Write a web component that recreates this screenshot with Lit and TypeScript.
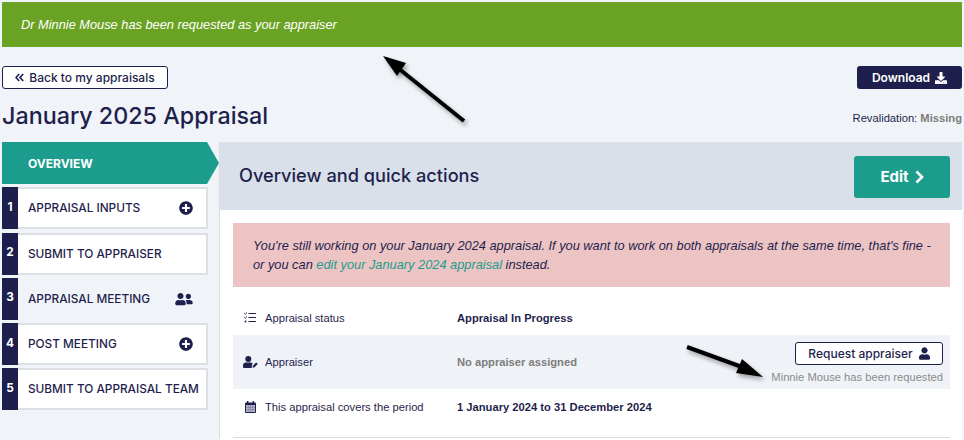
import { LitElement, css, html, svg } from "lit";
import { customElement } from "lit/decorators.js";

const PLUS =
  "M256 8C119 8 8 119 8 256s111 248 248 248 248-111 248-248S393 8 256 8zm144 276c0 6.6-5.4 12-12 12h-92v92c0 6.6-5.4 12-12 12h-56c-6.6 0-12-5.4-12-12v-92h-92c-6.6 0-12-5.4-12-12v-56c0-6.6 5.4-12 12-12h92v-92c0-6.6 5.4-12 12-12h56c6.6 0 12 5.4 12 12v92h92c6.6 0 12 5.4 12 12v56z";
const USER =
  "M224 256c70.7 0 128-57.3 128-128S294.7 0 224 0 96 57.3 96 128s57.3 128 128 128zm89.6 32h-16.7c-22.2 10.2-46.9 16-72.9 16s-50.6-5.8-72.9-16h-16.7C60.2 288 0 348.2 0 422.4V464c0 26.5 21.5 48 48 48h352c26.5 0 48-21.5 48-48v-41.6c0-74.2-60.2-134.4-134.4-134.4z";
const FRIENDS =
  "M192 256c61.9 0 112-50.1 112-112S253.9 32 192 32 80 82.1 80 144s50.1 112 112 112zm76.8 32h-8.3c-20.8 10-43.9 16-68.5 16s-47.6-6-68.5-16h-8.3C51.6 288 0 339.6 0 403.2V432c0 26.5 21.5 48 48 48h288c26.5 0 48-21.5 48-48v-28.8c0-63.6-51.6-115.2-115.2-115.2zM480 256c53 0 96-43 96-96s-43-96-96-96-96 43-96 96 43 96 96 96zm48 32h-3.8c-13.9 4.8-28.6 8-44.2 8s-30.3-3.2-44.2-8H432c-20.4 0-39.2 5.9-55.7 15.4 24.4 26.3 39.7 61.2 39.7 99.8v38.4c0 2.2-.5 4.3-.6 6.4H592c26.5 0 48-21.5 48-48 0-61.9-50.1-112-112-112z";
const DOWNLOAD =
  "M216 0h80c13.3 0 24 10.7 24 24v168h87.7c17.8 0 26.7 21.5 14.1 34.1L269.7 378.3c-7.5 7.5-19.8 7.5-27.3 0L90.1 226.1c-12.6-12.6-3.7-34.1 14.1-34.1H192V24c0-13.3 10.7-24 24-24zm296 376v112c0 13.3-10.7 24-24 24H24c-13.3 0-24-10.7-24-24V376c0-13.3 10.7-24 24-24h146.7l49 49c20.1 20.1 52.5 20.1 72.6 0l49-49H488c13.3 0 24 10.7 24 24zm-124 88c0-11-9-20-20-20s-20 9-20 20 9 20 20 20 20-9 20-20zm64 0c0-11-9-20-20-20s-20 9-20 20 9 20 20 20 20-9 20-20z";

const solid = (d: string, w: number, h: number, vb: string) =>
  html`<svg width=${w} height=${h} viewBox=${vb} fill="currentColor" aria-hidden="true">${svg`<path d=${d}></path>`}</svg>`;

const plusIcon = () => solid(PLUS, 14, 14, "0 0 512 512");
const friendsIcon = () => solid(FRIENDS, 18, 14, "0 0 640 512");
const userIcon = () => solid(USER, 11, 13, "0 0 448 512");
const downloadIcon = () => solid(DOWNLOAD, 12, 12, "0 0 512 512");

const backIcon = () => html`<svg width="9" height="9" viewBox="0 0 9 9" fill="none" stroke="currentColor" stroke-width="1.6" aria-hidden="true">
  <polyline points="4.2,1 1,4.5 4.2,8"></polyline>
  <polyline points="8.2,1 5,4.5 8.2,8"></polyline>
</svg>`;

const chevronIcon = () => html`<svg width="9" height="14" viewBox="0 0 9 14" fill="none" stroke="currentColor" stroke-width="2.6" aria-hidden="true">
  <polyline points="1.5,1.5 7,7 1.5,12.5"></polyline>
</svg>`;

const tasksIcon = () => html`<svg width="12" height="11" viewBox="0 0 12 11" fill="none" stroke="currentColor" aria-hidden="true">
  <path d="M4.5 1.5H12M4.5 5.5H12M4.5 9.5H12" stroke-width="1.2"></path>
  <path d="M0.4 1.3l.9.9L3 .5M0.4 5.3l.9.9L3 4.5" stroke-width="1"></path>
  <circle cx="1.5" cy="9.5" r="1" fill="currentColor" stroke="none"></circle>
</svg>`;

const userEditIcon = () => html`<svg width="15" height="12" viewBox="0 0 15 12" fill="currentColor" aria-hidden="true">
  <circle cx="5.3" cy="3" r="3"></circle>
  <path d="M3 6.6h4.6c.8 0 1.5.2 2 .6L8.8 9.6V12H1C.4 12 0 11.6 0 11V9.6C0 7.9 1.3 6.6 3 6.6z"></path>
  <path d="M9.6 11.6V10l3.6-3.6 1.6 1.6-3.6 3.6z"></path>
</svg>`;

const calendarIcon = () => html`<svg width="11" height="12" viewBox="0 0 11 12" aria-hidden="true">
  <rect x="0" y="1.5" width="11" height="10.5" rx="1" fill="#1f1f4d"></rect>
  <rect x="2" y="0" width="1.4" height="3" fill="#1f1f4d"></rect>
  <rect x="7.6" y="0" width="1.4" height="3" fill="#1f1f4d"></rect>
  <rect x="1" y="4" width="9" height="7" fill="#b9bccb"></rect>
  <path d="M1 6.3h9M1 8.6h9M3.3 4v7M5.5 4v7M7.7 4v7" stroke="#6e7190" stroke-width=".6" fill="none"></path>
</svg>`;

@customElement("app-root")
export class AppRoot extends LitElement {
  render() {
    return html`
      <div class="page">
        <div class="banner">Dr Minnie Mouse has been requested as your appraiser</div>

        <header class="head">
          <div class="head-left">
            <button class="btn outline back">${backIcon()} Back to my appraisals</button>
            <h1>January 2025 Appraisal</h1>
          </div>
          <div class="head-right">
            <button class="btn dark">Download ${downloadIcon()}</button>
            <div class="reval">Revalidation: <b>Missing</b></div>
          </div>
        </header>

        <div class="main">
          <nav class="side">
            <div class="overview">OVERVIEW</div>
            <div class="item"><span class="num">1</span><span class="lbl">APPRAISAL INPUTS</span><span class="ico">${plusIcon()}</span></div>
            <div class="item"><span class="num">2</span><span class="lbl">SUBMIT TO APPRAISER</span></div>
            <div class="item off"><span class="num">3</span><span class="lbl">APPRAISAL MEETING</span><span class="ico">${friendsIcon()}</span></div>
            <div class="item"><span class="num">4</span><span class="lbl">POST MEETING</span><span class="ico">${plusIcon()}</span></div>
            <div class="item"><span class="num">5</span><span class="lbl">SUBMIT TO APPRAISAL TEAM</span></div>
          </nav>

          <section class="panel">
            <div class="panel-head">
              <h2>Overview and quick actions</h2>
              <button class="btn edit">Edit ${chevronIcon()}</button>
            </div>
            <div class="panel-body">
              <div class="alert">
                You're still working on your January 2024 appraisal. If you want to work on both appraisals at the same time, that's fine -<br />
                or you can <a>edit your January 2024 appraisal</a> instead.
              </div>
              <div class="rows">
                <div class="row status">
                  <span class="r-ico">${tasksIcon()}</span>
                  <span class="r-lbl">Appraisal status</span>
                  <span class="r-val">Appraisal In Progress</span>
                </div>
                <div class="row shade">
                  <span class="r-ico">${userEditIcon()}</span>
                  <span class="r-lbl">Appraiser</span>
                  <span class="r-val muted">No appraiser assigned</span>
                  <div class="r-action">
                    <button class="btn outline req">Request appraiser ${userIcon()}</button>
                    <span class="note">Minnie Mouse has been requested</span>
                  </div>
                </div>
                <div class="row period">
                  <span class="r-ico">${calendarIcon()}</span>
                  <span class="r-lbl">This appraisal covers the period</span>
                  <span class="r-val">1 January 2024 to 31 December 2024</span>
                </div>
              </div>
              <div class="rule"></div>
            </div>
          </section>
        </div>

        <svg class="arrows" width="964" height="440" viewBox="0 0 964 440" aria-hidden="true">
          <line x1="464" y1="121" x2="398" y2="68" stroke="#000" stroke-width="4"></line>
          <polygon points="383,56 406,63 397,76" fill="#000"></polygon>
          <line x1="687" y1="347" x2="742" y2="367" stroke="#000" stroke-width="4"></line>
          <polygon points="763,377 742,359 736,373" fill="#000"></polygon>
        </svg>
      </div>
    `;
  }

  static styles = css`
    :host {
      display: block;
      width: 964px;
      height: 440px;
      overflow: hidden;
      color: #1f1f4d;
      font-family: "Liberation Sans", Arial, sans-serif;
    }
    .page {
      position: relative;
      box-sizing: border-box;
      width: 964px;
      height: 440px;
      padding: 2px 2px 0;
      background: #f0f4f8;
    }
    .banner {
      display: flex;
      align-items: center;
      height: 45px;
      padding-left: 19px;
      background: #6aa324;
      color: #fff;
      font-size: 12.8px;
      font-style: italic;
    }
    .head {
      display: flex;
      justify-content: space-between;
      height: 76px;
      margin-top: 19px;
    }
    .head-left,
    .head-right {
      display: flex;
      flex-direction: column;
    }
    .head-left {
      align-items: flex-start;
    }
    .head-right {
      align-items: flex-end;
    }
    h1 {
      margin: 12px 0 0;
      font-family: Inter, sans-serif;
      font-size: 23.3px;
      font-weight: 500;
      line-height: 30px;
    }
    .btn {
      display: inline-flex;
      align-items: center;
      justify-content: center;
      gap: 5px;
      box-sizing: border-box;
      height: 23px;
      padding: 0;
      border: 0;
      border-radius: 3px;
      font-family: Inter, sans-serif;
      font-size: 12px;
      font-weight: 500;
    }
    .outline {
      border: 1px solid #1f1f4d;
      background: #fff;
      color: #1f1f4d;
    }
    .back {
      width: 166px;
    }
    .dark {
      width: 105px;
      background: #1f1f4d;
      color: #fff;
      font-weight: 600;
    }
    .reval {
      margin-top: 22px;
      font-size: 11.2px;
      line-height: 14px;
    }
    .reval b {
      color: #7d7d7d;
    }
    .main {
      display: flex;
    }
    .side {
      display: flex;
      flex: none;
      flex-direction: column;
      gap: 3.25px;
      width: 217px;
    }
    .overview {
      display: flex;
      align-items: center;
      height: 42px;
      padding-left: 26px;
      background: #1c9c8c;
      color: #fff;
      font-family: Inter, sans-serif;
      font-size: 12px;
      font-weight: 700;
      clip-path: polygon(0 0, 205px 0, 217px 50%, 205px 100%, 0 100%);
    }
    .item {
      display: flex;
      align-items: center;
      box-sizing: border-box;
      width: 206px;
      height: 42px;
      border: 2px solid #dcdfe3;
      border-left: 0;
      background: #fff;
      font-family: Inter, sans-serif;
      font-size: 11.8px;
      font-weight: 500;
    }
    .item.off {
      border-color: transparent;
      background: transparent;
    }
    .num {
      align-self: stretch;
      display: flex;
      align-items: center;
      justify-content: center;
      flex: none;
      width: 16px;
      margin: -2px 0;
      padding-bottom: 3px;
      box-sizing: border-box;
      background: #1f1f4d;
      color: #fff;
      font-weight: 700;
    }
    .lbl {
      flex: 1;
      padding-left: 10px;
      white-space: nowrap;
    }
    .ico {
      display: flex;
      margin-right: 13px;
    }
    .panel {
      flex: 1;
      min-width: 0;
      box-sizing: border-box;
      height: 296px;
      border-left: 1px solid #d8dce0;
    }
    .panel-head {
      display: flex;
      align-items: center;
      justify-content: space-between;
      box-sizing: border-box;
      height: 68px;
      padding: 0 12px 0 19px;
      border-top: 1px solid #dfe3e7;
      background: #d9e0e9;
    }
    h2 {
      margin: 0 0 4px;
      font-family: Inter, sans-serif;
      font-size: 18.2px;
      font-weight: 500;
    }
    .edit {
      gap: 6px;
      width: 96px;
      height: 42px;
      background: #1c9c8c;
      color: #fff;
      font-size: 15px;
      font-weight: 700;
    }
    .panel-body {
      height: 228px;
      padding: 13px 12px 0 13px;
      background: #fff;
    }
    .alert {
      box-sizing: border-box;
      height: 64px;
      padding: 13px 20px 0;
      background: #edc4c4;
      font-size: 12.8px;
      font-style: italic;
      line-height: 19px;
      white-space: nowrap;
    }
    .alert a {
      color: #1c9c8c;
    }
    .rows {
      margin-top: 13px;
    }
    .row {
      display: flex;
      align-items: center;
      font-size: 11.2px;
    }
    .status {
      height: 35px;
    }
    .shade {
      height: 54px;
      background: #eff2f7;
    }
    .period {
      height: 36px;
    }
    .r-ico {
      display: flex;
      justify-content: center;
      width: 16px;
      margin-left: 9px;
    }
    .r-lbl {
      width: 192px;
      margin-left: 7px;
    }
    .r-val {
      font-weight: 700;
    }
    .muted {
      color: #7d7d7d;
    }
    .r-action {
      display: flex;
      flex-direction: column;
      align-items: flex-end;
      gap: 5px;
      margin-left: auto;
      margin-right: 7px;
      padding-top: 1px;
    }
    .req {
      gap: 6px;
      width: 148px;
    }
    .note {
      color: #8b8b8b;
      line-height: 14px;
    }
    .rule {
      margin-top: 12px;
      border-top: 1px solid #d8dce0;
    }
    .arrows {
      position: absolute;
      top: 0;
      left: 0;
      pointer-events: none;
      filter: drop-shadow(2px 3px 2px rgba(0, 0, 0, 0.35));
    }
  `;
}

declare global {
  interface HTMLElementTagNameMap {
    "app-root": AppRoot;
  }
}
